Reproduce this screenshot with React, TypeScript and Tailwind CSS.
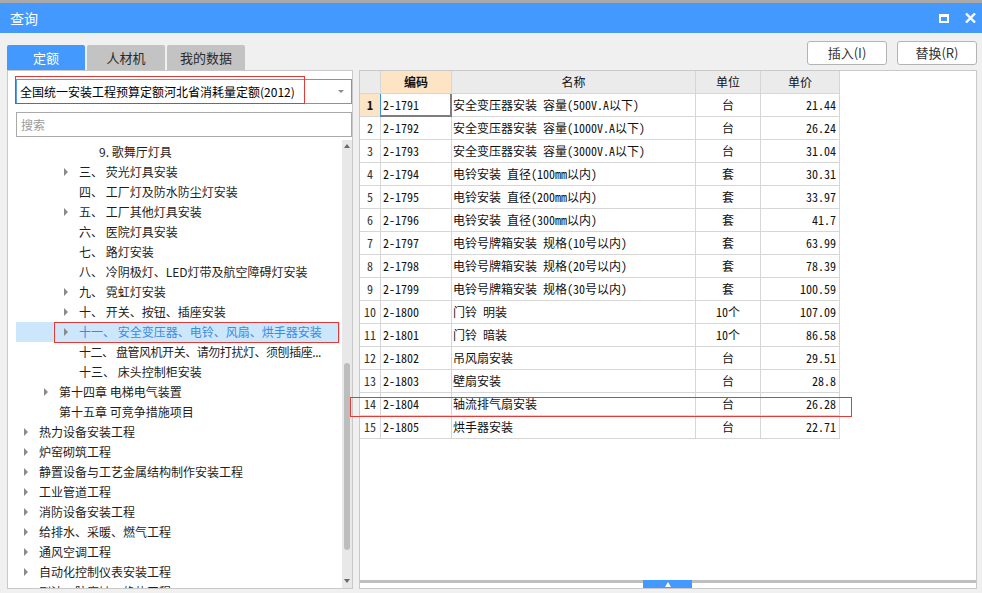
import React from "react";

type TreeItem = { level: 0 | 1 | 2 | 3; arrow: boolean; text: string; selected?: boolean; tight?: boolean };

const tree: TreeItem[] = [
  { level: 3, arrow: false, text: "9. 歌舞厅灯具" },
  { level: 2, arrow: true, text: "三、 荧光灯具安装" },
  { level: 2, arrow: false, text: "四、 工厂灯及防水防尘灯安装" },
  { level: 2, arrow: true, text: "五、 工厂其他灯具安装" },
  { level: 2, arrow: false, text: "六、 医院灯具安装" },
  { level: 2, arrow: false, text: "七、 路灯安装" },
  { level: 2, arrow: false, text: "八、 冷阴极灯、LED灯带及航空障碍灯安装" },
  { level: 2, arrow: true, text: "九、 霓虹灯安装" },
  { level: 2, arrow: true, text: "十、 开关、按钮、插座安装" },
  { level: 2, arrow: true, text: "十一、 安全变压器、电铃、风扇、烘手器安装", selected: true },
  { level: 2, arrow: false, text: "十二、 盘管风机开关、请勿打扰灯、须刨插座...", tight: true },
  { level: 2, arrow: false, text: "十三、 床头控制柜安装" },
  { level: 1, arrow: true, text: "第十四章 电梯电气装置" },
  { level: 1, arrow: false, text: "第十五章 可竞争措施项目" },
  { level: 0, arrow: true, text: "热力设备安装工程" },
  { level: 0, arrow: true, text: "炉窑砌筑工程" },
  { level: 0, arrow: true, text: "静置设备与工艺金属结构制作安装工程" },
  { level: 0, arrow: true, text: "工业管道工程" },
  { level: 0, arrow: true, text: "消防设备安装工程" },
  { level: 0, arrow: true, text: "给排水、采暖、燃气工程" },
  { level: 0, arrow: true, text: "通风空调工程" },
  { level: 0, arrow: true, text: "自动化控制仪表安装工程" },
  { level: 0, arrow: true, text: "刷油、防腐蚀、绝热工程" },
];

const levelPad: Record<number, string> = {
  0: "pl-[8px]",
  1: "pl-[28px]",
  2: "pl-[48px]",
  3: "pl-[68px]",
};

const rows: [string, string, string, string][] = [
  ["2-1791", "安全变压器安装 容量(500V.A以下)", "台", "21.44"],
  ["2-1792", "安全变压器安装 容量(1000V.A以下)", "台", "26.24"],
  ["2-1793", "安全变压器安装 容量(3000V.A以下)", "台", "31.04"],
  ["2-1794", "电铃安装 直径(100mm以内)", "套", "30.31"],
  ["2-1795", "电铃安装 直径(200mm以内)", "套", "33.97"],
  ["2-1796", "电铃安装 直径(300mm以内)", "套", "41.7"],
  ["2-1797", "电铃号牌箱安装 规格(10号以内)", "套", "63.99"],
  ["2-1798", "电铃号牌箱安装 规格(20号以内)", "套", "78.39"],
  ["2-1799", "电铃号牌箱安装 规格(30号以内)", "套", "100.59"],
  ["2-1800", "门铃 明装", "10个", "107.09"],
  ["2-1801", "门铃 暗装", "10个", "86.58"],
  ["2-1802", "吊风扇安装", "台", "29.51"],
  ["2-1803", "壁扇安装", "台", "28.8"],
  ["2-1804", "轴流排气扇安装", "台", "26.28"],
  ["2-1805", "烘手器安装", "台", "22.71"],
];

function TreeRow({ item }: { item: TreeItem }) {
  return (
    <div
      className={`relative flex h-[20px] w-[324px] shrink-0 items-center ${levelPad[item.level]} ${
        item.selected ? "bg-[#cce6fb] text-[#3a8be3]" : "text-[#1e1e1e]"
      }`}
    >
      <div className="flex w-[15px] shrink-0 items-center">
        {item.arrow && (
          <div className="h-0 w-0 border-y-[4px] border-l-[4px] border-y-transparent border-l-[#8a8a8a]" />
        )}
      </div>
      <span
        className={`whitespace-nowrap text-[12px] leading-[20px] ${item.tight ? "tracking-[-0.45px]" : ""}`}
      >
        {item.text}
      </span>
      {item.selected && (
        <div className="pointer-events-none absolute left-[38px] top-0 h-[21px] w-[285px] border border-[#e53935]" />
      )}
    </div>
  );
}

const cellB = "border-r border-b border-[#d6d6d6]";

export default function App() {
  return (
    <div className="relative h-[593px] w-[982px] overflow-hidden bg-[#f0f0f0] font-['Noto_Sans_CJK_SC',sans-serif]">
      {/* title bar */}
      <div className="h-[3px] bg-[#a9a9a9]" />
      <div className="flex h-[30px] items-center justify-between bg-[#4499ff] pl-[10px] pr-[6px]">
        <span className="text-[14px] text-white">查询</span>
        <div className="flex items-center gap-[16px]">
          <div className="h-[9px] w-[10px] border-[2px] border-t-[3px] border-white" />
          <svg width="11" height="10" viewBox="0 0 11 10">
            <path d="M1 0.5 L10 9.5 M10 0.5 L1 9.5" stroke="white" strokeWidth="2.4" />
          </svg>
        </div>
      </div>

      {/* toolbar */}
      <div className="flex h-[37px] justify-between pl-[7px] pr-[5px]">
        <div className="flex items-end gap-[2px]">
          <div className="flex h-[25px] w-[78px] items-center justify-center rounded-t-[2px] bg-[#4499ff] text-[13px] text-white">
            定额
          </div>
          <div className="flex h-[25px] w-[78px] items-center justify-center rounded-t-[2px] bg-[#c3c3c3] text-[13px] text-[#2a2a2a]">
            人材机
          </div>
          <div className="flex h-[25px] w-[78px] items-center justify-center rounded-t-[2px] bg-[#c3c3c3] text-[13px] text-[#2a2a2a]">
            我的数据
          </div>
        </div>
        <div className="mt-[8px] flex gap-[10px] self-start">
          <button className="flex h-[24px] w-[80px] items-center justify-center rounded-[3px] border border-[#b4b4b4] bg-white text-[13px] text-[#333]">
            插入(I)
          </button>
          <button className="flex h-[24px] w-[80px] items-center justify-center rounded-[3px] border border-[#b4b4b4] bg-white text-[13px] text-[#333]">
            替换(R)
          </button>
        </div>
      </div>

      {/* panels */}
      <div className="flex h-[519px] pl-[7px]">
        {/* left panel */}
        <div className="flex h-[519px] w-[346px] flex-col border border-[#c9c9c9] bg-white">
          <div className="relative ml-[8px] mt-[8px] flex h-[25px] w-[336px] items-center border border-[#5b9ee6] bg-white pl-[3px]">
            <span className="whitespace-nowrap text-[12px] text-black">全国统一安装工程预算定额河北省消耗量定额(2012)</span>
            <div className="absolute right-[7px] top-[10px] h-0 w-0 border-x-[3px] border-t-[3px] border-x-transparent border-t-[#8c8c8c]" />
            <div className="pointer-events-none absolute left-[-2px] top-[-4px] h-[28px] w-[290px] border border-[#e53935]" />
          </div>
          <div className="ml-[8px] mt-[8px] flex h-[25px] w-[336px] items-center border border-[#a9a9a9] bg-white pl-[4px]">
            <span className="text-[12px] text-[#9a9a9a]">搜索</span>
          </div>
          <div className="mt-[3px] flex min-h-0 flex-1">
            <div className="flex w-[334px] flex-col overflow-hidden pl-[8px] pt-[2px]">
              {tree.map((t, i) => (
                <TreeRow key={i} item={t} />
              ))}
            </div>
            <div className="relative w-[10px] bg-[#e8e8e8]">
              <div className="absolute left-[2px] top-[4px] h-0 w-0 border-x-[3.5px] border-b-[4px] border-x-transparent border-b-[#6a6a6a]" />
              <div className="absolute left-[2px] top-[223px] h-[187px] w-[6px] rounded-full bg-[#bdbdbd]" />
              <div className="absolute bottom-[5px] left-[2px] h-0 w-0 border-x-[3.5px] border-t-[4px] border-x-transparent border-t-[#6a6a6a]" />
            </div>
          </div>
        </div>

        {/* right panel */}
        <div className="relative ml-[6px] flex h-[519px] w-[618px] flex-col border border-[#c9c9c9] bg-white">
          <div className="flex-1">
            <div className="flex font-['Noto_Sans_Mono_CJK_SC','Noto_Sans_CJK_SC',monospace] text-[12px] text-[#111]">
              <div className={`h-[23px] w-[21px] bg-[#ebebeb] ${cellB}`} />
              <div className={`flex h-[23px] w-[71px] items-center justify-center bg-[#fde4c4] font-bold ${cellB}`}>编码</div>
              <div className={`flex h-[23px] w-[244px] items-center justify-center bg-[#ebebeb] ${cellB}`}>名称</div>
              <div className={`flex h-[23px] w-[65px] items-center justify-center bg-[#ebebeb] ${cellB}`}>单位</div>
              <div className={`flex h-[23px] w-[79px] items-center justify-center bg-[#ebebeb] ${cellB}`}>单价</div>
            </div>
            {rows.map((r, i) => (
              <div key={i} className="flex font-['Noto_Sans_Mono_CJK_SC','Noto_Sans_CJK_SC',monospace] text-[12px] text-[#111]">
                <div
                  className={`flex h-[23px] w-[21px] items-center justify-center ${cellB} ${
                    i === 0 ? "bg-[#fde4c4] font-bold" : "bg-white text-[#333]"
                  }`}
                >
                  {i + 1}
                </div>
                <div className={`relative flex h-[23px] w-[71px] items-center pl-[2px] ${cellB}`}>
                  {r[0]}
                  {i === 0 && (
                    <div className="pointer-events-none absolute bottom-[-1px] left-[-1px] right-[-1px] top-0 border-b-2 border-l border-r-2 border-b-[#7d7d7d] border-l-[#3d8ee8] border-r-[#7d7d7d]" />
                  )}
                </div>
                <div className={`flex h-[23px] w-[244px] items-center whitespace-nowrap pl-[1px] ${cellB}`}>{r[1]}</div>
                <div className={`flex h-[23px] w-[65px] items-center justify-center ${cellB}`}>{r[2]}</div>
                <div className={`flex h-[23px] w-[79px] items-center justify-end pr-[3px] ${cellB}`}>{r[3]}</div>
              </div>
            ))}
          </div>
          <div className="relative h-[8px]">
            <div className="absolute left-0 right-0 top-0 h-[3px] bg-[#bfbfbf]" />
            <div className="absolute left-[283px] top-0 flex h-[8px] w-[49px] items-center justify-center bg-[#4499ff]">
              <div className="h-0 w-0 border-x-[3px] border-b-[5px] border-x-transparent border-b-white" />
            </div>
          </div>
          <div className="pointer-events-none absolute left-[-10px] top-[326px] h-[20px] w-[502px] border border-[#e53935]" />
        </div>
      </div>
    </div>
  );
}
